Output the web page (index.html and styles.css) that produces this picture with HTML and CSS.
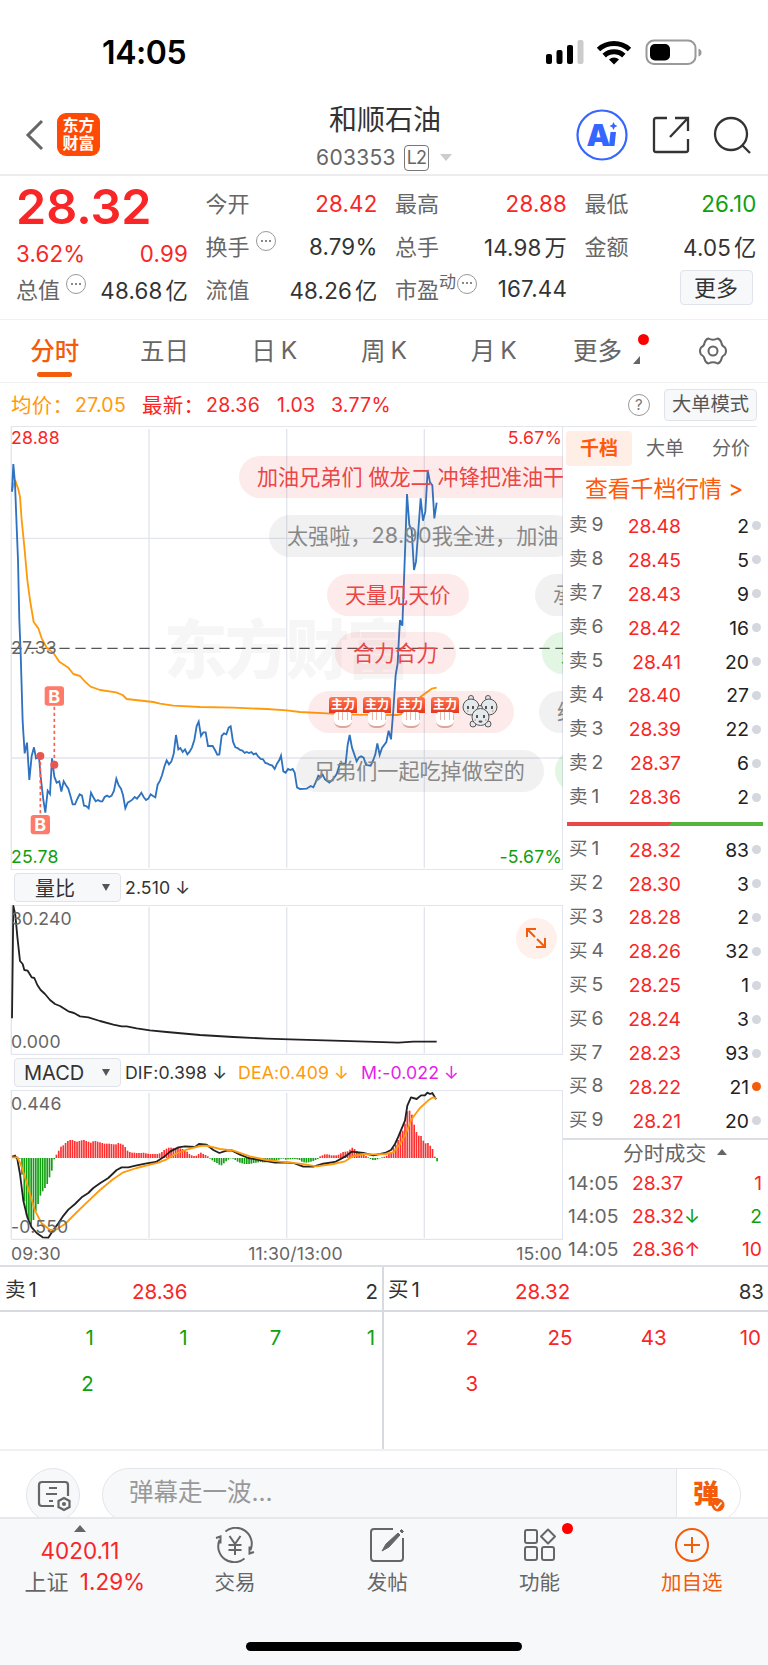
FILE: index.html
```html
<!DOCTYPE html>
<html lang="zh-CN">

<head>
  <meta charset="UTF-8">
  <meta name="viewport" content="width=device-width, initial-scale=1.0">
  <title>和顺石油</title>
  <link rel="stylesheet" href="styles.css">
</head>

<body>
  <div class="status-bar">
    <span class="clock">14:05</span>
    <svg class="status-icons" width="160" height="32" viewBox="0 0 160 32">
      <rect x="2" y="18" width="6" height="10" rx="2" />
      <rect x="12.5" y="14" width="6" height="14" rx="2" />
      <rect x="23" y="9" width="6" height="19" rx="2" />
      <rect x="33.500" y="4" width="6" height="24" rx="2" fill="#ccc" />
      <path d="M54.500 13.500a23 23 0 0 1 31 0M60.200 19.600a14.500 14.500 0 0 1 19.600 0" fill="none" stroke="#000" stroke-width="5" />
      <path d="M70 28.500l-5-5a7.500 7.500 0 0 1 10 0z" />
      <rect x="102.500" y="4.500" width="49" height="23.500" rx="7.500" fill="none" stroke="#999" stroke-width="2" />
      <rect x="106" y="8" width="20" height="16.500" rx="5" />
      <path d="M154.500 12.500q3 1 3 4t-3 4z" fill="#999" />
    </svg>
  </div>

  <header class="navbar">
    <div class="nav-left">
      <svg width="20" height="32" viewBox="0 0 20 32">
        <path d="M17 2L3 16l14 14" fill="none" stroke="#666" stroke-width="3" />
      </svg>
      <div class="brand"><span>东方</span><span>财富</span></div>
    </div>
    <div class="nav-title">
      <h1>和顺石油</h1>
      <p>603353 <span class="level">L2</span> <i class="caret"></i></p>
    </div>
    <div class="nav-right">
      <svg width="52" height="52" viewBox="0 0 52 52">
        <circle cx="26" cy="26" r="24.500" fill="none" stroke="#3566ff" stroke-width="2.200" />
        <text class="ai-text" x="10.500" y="37">A</text>
        <path d="M34.500 23h5.500l-1.500 14h-5.500zM37.500 13l1.300 2.700 2.700 1.300-2.700 1.300-1.300 2.700-1.300-2.700-2.700-1.300 2.700-1.300z" fill="#3566ff" />
      </svg>
      <svg width="38" height="38" viewBox="0 0 38 38" fill="none" stroke="#333" stroke-width="2.300">
        <path d="M15 2H4a2 2 0 0 0-2 2v30a2 2 0 0 0 2 2h30a2 2 0 0 0 2-2V23M23 2h13v13M35.500 2.500L18 21" />
      </svg>
      <svg width="38" height="38" viewBox="0 0 38 38" fill="none" stroke="#333" stroke-width="2.300">
        <circle cx="18" cy="18" r="16" />
        <path d="M29 29l8 8" />
      </svg>
    </div>
  </header>

  <section class="quote">
    <div class="quote-col">
      <strong class="price">28.32</strong>
      <div class="pair change red"><span>3.62%</span><span>0.99</span></div>
      <div class="pair"><label>总值<i class="dots"></i></label><span>48.68<u>亿</u></span></div>
    </div>
    <div class="quote-col">
      <div class="pair"><label>今开</label><span class="red">28.42</span></div>
      <div class="pair"><label>换手<i class="dots"></i></label><span>8.79%</span></div>
      <div class="pair"><label>流值</label><span>48.26<u>亿</u></span></div>
    </div>
    <div class="quote-col">
      <div class="pair"><label>最高</label><span class="red">28.88</span></div>
      <div class="pair"><label>总手</label><span>14.98<u>万</u></span></div>
      <div class="pair"><label>市盈<sup>动</sup><i class="dots"></i></label><span>167.44</span></div>
    </div>
    <div class="quote-col">
      <div class="pair"><label>最低</label><span class="green">26.10</span></div>
      <div class="pair"><label>金额</label><span>4.05<u>亿</u></span></div>
      <div class="pair more"><button>更多</button></div>
    </div>
  </section>

  <nav class="tabs">
    <a class="active">分时</a>
    <a>五日</a>
    <a>日<b>K</b></a>
    <a>周<b>K</b></a>
    <a>月<b>K</b></a>
    <a class="tab-more">更多</a>
    <a class="tab-set">
      <svg width="30" height="30" viewBox="0 0 30 30" fill="none" stroke="#666" stroke-width="2">
        <path d="M10.500 2.500q4.500 2.500 9 0q3 .6 4 4.500q0 2.500 3.500 4.500q2 3.500 0 7q-3.500 2-3.500 4.500q-1 3.900-4 4.500q-4.500-2.500-9 0q-3-.6-4-4.500q0-2.500-3.500-4.500q-2-3.500 0-7q3.500-2 3.500-4.500q1-3.900 4-4.500z" />
        <circle cx="15" cy="15" r="4.500" />
      </svg>
    </a>
  </nav>

  <div class="summary">
    <span class="orange avg">均价：</span><span class="orange avg-val">27.05</span>
    <span class="red last">最新：</span><span class="red last-val">28.36</span>
    <span class="red diff">1.03</span><span class="red">3.77%</span>
    <span class="help">?</span>
    <button class="mode">大单模式</button>
  </div>

  <main class="market">
    <div class="charts">
      <div class="main-chart">
        <svg width="563" height="444" viewBox="0 18 1689 1332">
          <g class="grid">
            <path d="M34 19H1689M34 355H1689M34 1014H1689M34 1349H1689M34 19V1350M1688 19V1350" />
            <path d="M447 27V1343M860 27V1343M1273 27V1343" />
          </g>
          <text class="watermark" x="492" y="758" textLength="738">东方财富</text>
          <path class="mid" d="M34 685H1689" />
          <polyline class="line-avg" points="36,215 40,195 46,182 54,205 60,230 65,300 73,380 82,480 90,540 101,606 115,625 125,655 140,683 160,698 178,725 205,743 220,762 240,768 255,785 272,800 300,810 348,817 368,825 380,837 460,846 480,851 520,857 600,861 700,863 800,867 860,871 900,876 980,880 1060,884 1195,885 1210,880 1240,850 1265,828 1295,806 1310,803" />
          <polyline class="line-price" points="36,215 40,132 45,190 50,320 54,420 58,600 62,700 68,905 74,1000 81,968 88,1080 95,1008 102,982 108,1015 117,1010 122,1070 130,1140 136,1178 143,1112 150,1122 156,1015 163,1070 170,1088 178,1084 184,1115 191,1084 198,1096 205,1106 212,1130 218,1153 225,1153 232,1137 239,1123 246,1127 252,1157 259,1158 266,1165 273,1118 280,1132 287,1144 294,1140 301,1144 307,1144 314,1131 321,1127 328,1131 335,1127 342,1112 349,1076 356,1096 363,1106 369,1125 376,1165 383,1148 390,1144 397,1139 404,1131 411,1136 418,1127 424,1118 431,1131 438,1140 445,1136 452,1123 459,1128 466,1132 473,1094 480,1082 486,1066 493,1040 500,1021 507,1033 514,1025 521,1002 528,945 535,988 541,984 548,996 555,988 562,1003 569,995 576,982 583,960 590,918 596,905 603,948 610,937 617,937 624,978 638,978 645,990 652,1004 658,1003 665,948 672,940 679,943 686,923 692,919 699,965 706,982 713,984 720,990 727,992 734,999 740,996 747,999 754,996 761,1003 768,1000 775,1010 782,1017 789,1018 796,1029 803,1031 810,1035 817,1037 824,1047 831,1031 838,1020 843,1007 850,1054 857,1058 864,1047 871,1050 878,1047 884,1058 891,1102 900,1107 920,1106 932,1098 940,1102 948,1085 955,1067 962,1072 968,1064 975,1078 988,1088 1000,1077 1010,1062 1020,1031 1037,1030 1043,975 1049,945 1056,983 1063,1003 1070,1024 1077,1012 1083,1009 1091,1013 1098,1035 1112,1037 1120,1020 1126,1003 1132,970 1139,1005 1146,984 1159,966 1166,932 1173,958 1180,870 1187,765 1193,730 1197,650 1200,600 1207,617 1212,480 1216,370 1221,222 1228,315 1235,330 1242,450 1248,425 1255,330 1262,235 1269,302 1276,275 1283,150 1290,187 1297,196 1303,295 1310,248" />
          <g class="buy-marks">
            <path d="M163 860V1034M121 1008V1184" />
            <circle cx="163" cy="1034" r="12" />
            <circle cx="121" cy="1008" r="12" />
            <rect x="134" y="799" width="58" height="58" rx="9" />
            <rect x="92" y="1185" width="58" height="58" rx="9" />
            <text x="163" y="848">B</text>
            <text x="121" y="1234">B</text>
          </g>
          <text class="axis up" x="33" y="73">28.88</text>
          <text class="axis" x="33" y="702">27.33</text>
          <text class="axis down" x="33" y="1330">25.78</text>
          <text class="axis up end" x="1686" y="73">5.67%</text>
          <text class="axis down end" x="1686" y="1330">-5.67%</text>
        </svg>

        <div class="danmaku">
          <div class="track">
            <span class="pill pink d1">加油兄弟们 做龙二 冲锋把准油干</span>
          </div>
          <div class="track">
            <span class="pill grey d2">太强啦，<b>28.90</b>我全进，加油</span>
          </div>
          <div class="track">
            <span class="pill pink d3">天量见天价</span><span class="pill grey d3b">承</span>
          </div>
          <div class="track">
            <span class="pill pink d4">合力合力</span><span class="pill mint d4b">多</span>
          </div>
          <div class="track">
            <span class="pill pink d5">
              <i class="fist">主力</i><i class="fist">主力</i><i class="fist">主力</i><i class="fist">主力</i>
              <svg width="36" height="34" viewBox="0 0 36 34" fill="#e4e9ec" stroke="#555" stroke-width="1">
                <circle cx="9" cy="4" r="2.500" /><circle cx="26" cy="4" r="2.500" />
                <circle cx="9" cy="13" r="8" /><circle cx="27" cy="13" r="8" />
                <circle cx="11" cy="30" r="3" /><circle cx="26" cy="30" r="3" />
                <circle cx="18" cy="14" r="2.500" /><circle cx="18.500" cy="23" r="8.500" />
                <path d="M6 12v3M11 12v3M24 12v3M30 12v3M15 21v3M22 21v3M17 27q1.500 1.500 3 0" stroke-width="2" />
                <path d="M5 17h1.500M30 17h1.500M12.500 26h1.500M23 26h1.500" stroke="#f5a9a0" stroke-width="2" />
              </svg>
            </span><span class="pill grey d5b">给</span>
          </div>
          <div class="track">
            <span class="pill grey d6">兄弟们一起吃掉做空的</span><span class="pill mint d6b"></span>
          </div>
        </div>
      </div>

      <div class="indicator">
        <button class="picker">量比<i></i></button>
        <span>2.510 ↓</span>
      </div>
      <div class="sub-chart">
        <svg width="563" height="150" viewBox="0 135 1689 450">
          <g class="grid">
            <path d="M34 136H1689M34 583H1689M34 136V583M1688 136V583" />
            <path d="M447 142V580M860 142V580M1273 142V580" />
          </g>
          <polyline class="line-dark" points="36,475 40,138 46,165 52,230 60,303 68,312 73,330 83,332 95,352 103,354 112,375 122,390 135,402 150,420 165,432 180,438 205,454 222,459 240,469 265,472 300,483 340,494 365,499 380,499 410,505 450,511 500,516 600,525 700,531 800,536 870,538 1000,542 1100,545 1195,548 1240,545 1310,545" />
          <text class="axis" x="33" y="194">30.240</text>
          <text class="axis" x="33" y="564">0.000</text>
        </svg>
        <div class="expand">
          <svg width="22" height="22" viewBox="0 0 22 22" fill="none" stroke="#f25c0a" stroke-width="2">
            <path d="M2 10V2h9M2 2l8 8M12 12l8 8M20 11v9h-9" />
          </svg>
        </div>
      </div>

      <div class="indicator macd-head">
        <button class="picker">MACD<i></i></button>
        <span>DIF:0.398 ↓</span>
        <span class="orange">DEA:0.409 ↓</span>
        <span class="magenta">M:-0.022 ↓</span>
      </div>
      <div class="sub-chart">
        <svg width="563" height="150" viewBox="0 688 1689 450">
          <g class="grid">
            <path d="M34 689H1689M34 1136H1689M34 689V1136M1688 689V1136" />
            <path d="M447 696V1132M860 696V1132M1273 696V1132" />
          </g>
          <g id="macd_bars"></g>
          <polyline class="line-dark" points="36,888 45,886 52,895 60,940 70,1020 82,1070 95,1100 110,1117 128,1130 145,1131 160,1108 175,1088 188,1068 205,1047 225,1030 245,1010 265,997 280,982 300,968 325,952 350,928 365,920 385,920 410,914 440,908 468,904 490,890 510,873 535,860 555,857 585,859 597,850 620,852 640,868 658,877 680,870 695,869 720,882 745,892 790,900 825,906 850,905 880,907 910,918 940,918 965,910 1005,904 1035,888 1055,873 1090,877 1120,884 1155,877 1173,868 1185,850 1195,828 1215,780 1222,735 1233,710 1250,715 1263,704 1275,704 1282,696 1290,700 1297,697 1308,716" />
          <polyline class="line-avg" points="36,890 52,890 62,910 75,950 90,1000 105,1050 125,1088 150,1108 170,1106 195,1090 225,1060 260,1026 300,988 340,955 370,935 410,922 450,912 475,906 500,896 530,878 560,867 600,856 620,855 660,865 700,870 750,887 800,898 840,903 900,909 950,917 1000,910 1035,902 1060,886 1090,880 1120,881 1155,880 1180,875 1200,850 1215,825 1235,775 1260,742 1285,719 1300,710 1308,714" />
          <text class="axis" x="33" y="748">0.446</text>
          <text class="axis" x="33" y="1118">-0.550</text>
        </svg>
      </div>
      <div class="times"><span>09:30</span><span>11:30/13:00</span><span>15:00</span></div>
    </div>

    <aside class="book">
      <div class="book-tabs"><span class="on">千档</span><span>大单</span><span>分价</span></div>
      <a class="book-link">查看千档行情 &gt;</a>
      <div id="asks"></div>
      <div class="ratio"></div>
      <div id="bids"></div>
      <div class="trades">
        <h2>分时成交 <i></i></h2>
        <p><span>14:05</span><b>28.37</b><em>1</em></p>
        <p><span>14:05</span><b>28.32<s class="green">↓</s></b><em class="green">2</em></p>
        <p><span>14:05</span><b>28.36<s>↑</s></b><em>10</em></p>
      </div>
    </aside>
  </main>

  <section class="queue">
    <div class="side">
      <div class="side-head"><span>卖<u>1</u></span><b>28.36</b><em>2</em></div>
      <div class="side-grid green"><span>1</span><span>1</span><span>7</span><span>1</span><span>2</span></div>
    </div>
    <div class="side">
      <div class="side-head"><span>买<u>1</u></span><b>28.32</b><em>83</em></div>
      <div class="side-grid red"><span>2</span><span>25</span><span>43</span><span>10</span><span>3</span></div>
    </div>
  </section>

  <section class="comment">
    <div class="round">
      <svg width="34" height="32" viewBox="0 0 34 32" fill="none" stroke="#666" stroke-width="2.200">
        <path d="M17 26H5a3 3 0 0 1-3-3V5a3 3 0 0 1 3-3h23a3 3 0 0 1 3 3v11M12 8h8M9 14h11M12 21h4M27 18l5.500 3v6L27 30l-5.500-3v-6z" />
        <circle cx="27" cy="24" r="1" />
      </svg>
    </div>
    <div class="input">
      <span>弹幕走一波...</span>
      <div class="bullet">弹
        <svg width="14" height="14" viewBox="0 0 14 14">
          <circle cx="7" cy="7" r="6.500" fill="#f25c0a" />
          <path d="M3.500 7l2.500 3 4.500-5.500" fill="none" stroke="#fff" stroke-width="1.600" />
        </svg>
      </div>
    </div>
  </section>

  <footer class="tabbar">
    <div class="index">
      <i></i>
      <b>4020.11</b>
      <p>上证 <b>1.29%</b></p>
    </div>
    <div class="item">
      <svg width="40" height="36" viewBox="0 0 40 36" fill="none" stroke="#666" stroke-width="2">
        <path d="M10.500 4.500A16 16 0 0 1 35.500 23M29.500 31.500A16 16 0 0 1 4.500 13M1 11l4.500-1.500v7M39 25l-4.500 1.500v-7" />
        <path d="M14.500 9l5.500 8 5.500-8M20 17v11M13.500 18h13M13.500 23h13" />
      </svg>
      <span>交易</span>
    </div>
    <div class="item">
      <svg width="36" height="36" viewBox="0 0 36 36" fill="none" stroke="#666" stroke-width="2">
        <path d="M24 2H5a3 3 0 0 0-3 3v26a3 3 0 0 0 3 3h26a3 3 0 0 0 3-3V11" />
        <path d="M13 24l4-7L29 6l2 2-11 12zM31 4l1.500-1.500 2 2L33 6z" fill="#666" stroke-width="1" />
      </svg>
      <span>发帖</span>
    </div>
    <div class="item badge">
      <svg width="36" height="36" viewBox="0 0 36 36" fill="none" stroke="#666" stroke-width="2">
        <rect x="3" y="3" width="12" height="13" rx="2" />
        <rect x="3" y="20" width="12" height="13" rx="2" />
        <rect x="20" y="20" width="12" height="13" rx="2" />
        <path d="M26 2.500l7 7-7 7-7-7z" stroke-linejoin="round" />
      </svg>
      <span>功能</span>
    </div>
    <div class="item add">
      <svg width="36" height="36" viewBox="0 0 36 36" fill="none" stroke="#f25c0a" stroke-width="2">
        <circle cx="18" cy="18" r="16" />
        <path d="M18 10v16M10 18h16" />
      </svg>
      <span>加自选</span>
    </div>
    <div class="home"></div>
  </footer>

  <script src="script.js"></script>
</body>

</html>
```
FILE: styles.css
```css
* {
  box-sizing: border-box;
  margin: 0;
  padding: 0;
}

body {
  width: 768px;
  height: 1665px;
  overflow: hidden;
  background: #fff;
  color: #333;
  font-family: Inter, "Noto Sans CJK SC", sans-serif;
  font-size: 22px;
  text-autospace: no-autospace;
  white-space: nowrap;
}

i,
em,
u,
s {
  font-style: normal;
  text-decoration: none;
}

b {
  font-weight: 400;
}

button {
  font: inherit;
  color: inherit;
  background: #f7f8fa;
  border: 1.5px solid #e0e3e9;
  border-radius: 4px;
}

svg {
  display: block;
  flex: none;
}

.red {
  color: #f82626;
}

.green {
  color: #0fa00f;
}

.orange {
  color: #ff9a0a;
}

.magenta {
  color: #e61ee6;
}

/* Status bar */
.status-bar {
  height: 95px;
  padding: 36px 64px 0 102px;
  display: flex;
  justify-content: space-between;
}

.clock {
  font-size: 32px;
  line-height: 34px;
  font-weight: 600;
  letter-spacing: -.4px;
  color: #000;
}

/* Navigation */
.navbar {
  height: 81px;
  padding: 0 17px 0 25px;
  display: flex;
  justify-content: space-between;
  border-bottom: 2px solid #ececee;
}

.nav-left,
.nav-right {
  width: 176px;
  display: flex;
  align-items: center;
}

.nav-left {
  gap: 12px;
}

.nav-right {
  width: 175px;
  justify-content: space-between;
}

.brand {
  width: 43px;
  height: 43px;
  border-radius: 9px;
  background: #ff4a05;
  color: #fff;
  display: flex;
  flex-direction: column;
  align-items: center;
  justify-content: center;
  font-size: 16px;
  line-height: 17.5px;
  font-weight: 700;
}

.nav-title {
  width: 140px;
  margin-right: 7px;
  display: flex;
  flex-direction: column;
  align-items: center;
}

.nav-title h1 {
  margin-top: 8px;
  font-size: 28px;
  line-height: 34px;
  font-weight: 400;
}

.nav-title p {
  display: flex;
  align-items: center;
  gap: 8px;
  margin-top: 7px;
  padding-right: 2px;
  font-size: 21px;
  line-height: 27px;
  letter-spacing: .3px;
  color: #666;
}

.level {
  width: 25px;
  height: 26px;
  border: 1.5px solid #777;
  border-radius: 4px;
  font-size: 18px;
  line-height: 24px;
  letter-spacing: -1px;
  text-align: center;
}

.caret {
  border: 6px solid transparent;
  border-top: 7px solid #ccc;
  border-bottom: 0;
  margin-left: 3px;
}

.ai-text {
  font-size: 30px;
  font-weight: 900;
  fill: #3566ff;
}

/* Quote */
.quote {
  height: 144px;
  padding: 6px 12px 0 16px;
  display: grid;
  grid-template-columns: 172px 172px 172px 172px;
  column-gap: 17.5px;
  border-bottom: 1.5px solid #f0f0f2;
}

.quote-col {
  display: flex;
  flex-direction: column;
}

.price {
  height: 52px;
  font-size: 48.5px;
  line-height: 50px;
  font-weight: 600;
  color: #f82626;
}

.pair {
  height: 42.700px;
  display: flex;
  justify-content: space-between;
  align-items: center;
}

.pair > label,
.pair > span {
  position: relative;
  top: -1px;
}

.pair > span {
  top: 0;
  font-size: 22.3px;
  letter-spacing: .2px;
}

.pair label {
  display: flex;
  align-items: center;
  color: #666;
}

.change {
  height: 34px;
  padding-top: 5px;
}

.quote-col u {
  padding-left: 3px;
}

.pair sup {
  align-self: flex-start;
  font-size: 17px;
  line-height: 20px;
}

.dots {
  position: relative;
  top: -4px;
  width: 20px;
  height: 20px;
  margin-left: 6px;
  border: 1.5px solid #999;
  border-radius: 50%;
}

sup + .dots {
  margin-left: 1px;
}

.dots::before {
  content: "";
  display: block;
  width: 2px;
  height: 2px;
  margin: 7.5px auto;
  background: #888;
  box-shadow: -4px 0 #888, 4px 0 #888;
}

.more button {
  width: 73px;
  height: 35px;
  margin: -2px 4px 0 auto;
  line-height: 30px;
}

/* Period tabs */
.tabs {
  height: 63px;
  display: flex;
  font-size: 24.5px;
  color: #666;
  border-bottom: 1.5px solid #f0f0f2;
}

.tabs a {
  position: relative;
  width: 109.800px;
  padding-bottom: 3px;
  display: flex;
  justify-content: center;
  align-items: center;
}

.tabs b {
  padding-left: 5px;
}

.tabs .active {
  color: #f25c0a;
  font-weight: 500;
}

.tabs .active::after {
  content: "";
  position: absolute;
  bottom: 5px;
  width: 35px;
  height: 5.500px;
  border-radius: 3px;
  background: #f25c0a;
}

.tabs .tab-more {
  padding-right: 12px;
}

.tabs .tab-set {
  padding-bottom: 0;
}

.tab-more::before {
  content: "";
  position: absolute;
  right: 9px;
  top: 14px;
  width: 11px;
  height: 11px;
  border-radius: 50%;
  background: #f00;
}

.tab-more::after {
  content: "";
  position: absolute;
  right: 18px;
  bottom: 18px;
  border-left: 7px solid transparent;
  border-bottom: 8px solid #666;
}

/* Summary line */
.summary {
  height: 43px;
  padding: 0 11px;
  display: flex;
  align-items: center;
  font-size: 19.5px;
  letter-spacing: .25px;
}

.summary .avg,
.summary .last {
  width: 64px;
  margin-top: -2px;
  font-size: 20.5px;
}

.summary .avg-val {
  width: 67px;
}

.summary .last-val {
  width: 71px;
}

.summary .diff {
  width: 54px;
}

.help {
  width: 22px;
  height: 22px;
  margin-left: auto;
  margin-right: 14px;
  border: 1.5px solid #999;
  border-radius: 50%;
  font-size: 15px;
  line-height: 19px;
  text-align: center;
  color: #777;
}

.mode {
  width: 93px;
  height: 32px;
  color: #555;
  font-size: 19.3px;
  line-height: 27px;
  letter-spacing: 0;
}

/* Charts */
.market {
  height: 841px;
  display: flex;
  border-bottom: 2px solid #dcdee4;
}

.charts {
  width: 563px;
}

.main-chart {
  position: relative;
  height: 444px;
  overflow: hidden;
}

.grid path {
  fill: none;
  stroke: #e2e5ed;
  stroke-width: 4;
}

.watermark {
  font-size: 190px;
  font-weight: 900;
  fill: #f6f6f7;
}

.mid {
  stroke: #555;
  stroke-width: 4;
  stroke-dasharray: 31 17;
}

.line-avg,
.line-price,
.line-dark {
  fill: none;
  stroke: #ff9a0a;
  stroke-width: 5.5;
  stroke-linejoin: round;
}

.line-price {
  stroke: #2e72c0;
  stroke-linejoin: miter;
}

.line-dark {
  stroke: #222;
}

.buy-marks path {
  stroke: #fa5f50;
  stroke-width: 5;
  stroke-dasharray: 10 8;
}

.buy-marks circle {
  fill: #e9564f;
}

.buy-marks rect {
  fill: #ff7a68;
}

.buy-marks text {
  font-size: 54px;
  font-weight: 700;
  text-anchor: middle;
  fill: #fff;
}

.axis {
  font-size: 53px;
  letter-spacing: .6px;
  fill: #666;
}

.up {
  fill: #f82626;
}

.down {
  fill: #0fa00f;
}

.end {
  text-anchor: end;
}

/* Danmaku floats over the price lines */
.danmaku {
  position: absolute;
  inset: 30px 0 0 0;
  display: flex;
  flex-direction: column;
  gap: 16.8px;
}

.track {
  height: 42px;
  display: flex;
}

.pill {
  flex: none;
  display: flex;
  align-items: center;
  height: 42px;
  padding: 0 18px 2px;
  border-radius: 21px;
  font-size: 21.1px;
}

.pill b {
  font-size: 21.5px;
  letter-spacing: .3px;
}

.pink {
  background: rgba(236, 62, 62, .1);
  color: #ec4545;
}

.grey {
  background: rgba(120, 120, 120, .1);
  color: #888;
}

.mint {
  background: rgba(60, 185, 60, .14);
  color: #3cb43c;
}

.d1 {
  margin-left: 239px;
}

.d2 {
  margin-left: 269px;
}

.d3 {
  margin-left: 327px;
  width: 142px;
}

.d3b {
  margin-left: 66px;
}

.d4 {
  margin-left: 335px;
  width: 121px;
}

.d4b {
  margin-left: 86px;
}

.d5 {
  margin-left: 308px;
  width: 206px;
  padding-left: 21px;
  gap: 6px;
}

.d5 svg {
  margin-left: -3px;
}

.d5b {
  margin-left: 25px;
}

.d6 {
  margin-left: 296px;
  width: 248px;
}

.d6b {
  margin-left: 11px;
  width: 60px;
}

.fist {
  position: relative;
  flex: none;
  width: 28px;
  height: 29px;
  font-size: 12px;
  line-height: 15px;
  font-weight: 700;
  text-align: center;
  color: #fff;
  background: linear-gradient(#ff7a50, #e9361f) 0 0 / 28px 16px no-repeat;
  border-radius: 3px;
}

.fist::after {
  content: "";
  position: absolute;
  left: 5px;
  top: 15px;
  width: 18px;
  height: 14px;
  border-radius: 4px 4px 7px 7px;
  border-bottom: 2px solid #dda698;
  background: repeating-linear-gradient(90deg, #fff 0 3.500px, #e8b8ac 3.500px 4.500px) 0 0 / 18px 8px no-repeat, #fff;
}

.indicator {
  height: 35px;
  padding-left: 14px;
  display: flex;
  align-items: center;
  gap: 4px;
  font-size: 17.7px;
  letter-spacing: .1px;
}

.indicator .orange {
  margin-left: 7px;
}

.indicator .magenta {
  margin-left: 8px;
}

.picker {
  width: 107px;
  height: 29px;
  padding: 0 10px 0 9px;
  display: flex;
  align-items: center;
  justify-content: space-between;
  font-size: 20px;
}

.indicator:not(.macd-head) .picker {
  padding-left: 20px;
}

.picker i {
  border: 4.500px solid transparent;
  border-top: 7px solid #555;
  border-bottom: 0;
}

.sub-chart {
  position: relative;
  height: 150px;
}

.expand {
  position: absolute;
  right: 6px;
  top: 13px;
  width: 41px;
  height: 41px;
  padding: 9px;
  border-radius: 50%;
  background: #fef0ea;
}

.times {
  height: 25px;
  padding: 0 1px 0 11px;
  display: grid;
  grid-template-columns: 1fr 2fr 1fr;
  font-size: 17.7px;
  line-height: 28px;
  letter-spacing: .1px;
  color: #666;
}

.times span:nth-child(2) {
  padding-left: 18px;
  text-align: center;
}

.times span:last-child {
  text-align: right;
}

/* Order book */
.book {
  width: 205px;
  font-size: 19.3px;
}

.book-tabs {
  height: 40px;
  margin-right: 11px;
  padding: 4px 0 0 3px;
  display: flex;
  border-top: 1px solid #e2e5ed;
  color: #666;
}

.book-tabs span {
  flex: none;
  width: 66px;
  font-size: 19px;
  line-height: 35px;
  text-align: center;
}

.book-tabs .on {
  border-radius: 4px;
  background: #ffeee6;
  color: #ff5a0a;
  font-weight: 700;
}

.book-link {
  display: block;
  height: 43px;
  padding-left: 22px;
  font-size: 22.800px;
  line-height: 46px;
  color: #ff5a0a;
}

.level-row {
  height: 33.920px;
  padding: 0 7px 0 6px;
  display: flex;
  align-items: center;
  color: #666;
}

.level-row span {
  width: 52px;
  display: flex;
  align-items: baseline;
  gap: 4px;
  font-size: 18.500px;
  line-height: 26px;
  margin-top: -3px;
}

.level-row u {
  font-size: 19.3px;
}

.level-row b {
  width: 60px;
  text-align: right;
  color: #f82626;
}

.level-row em {
  flex: 1;
  text-align: right;
  color: #222;
}

.level-row i {
  width: 9px;
  height: 9px;
  margin-left: 3px;
  border-radius: 50%;
  background: #d4d7de;
}

.level-row .hot {
  background: #f25c0a;
}

.ratio {
  height: 4px;
  margin: 8px 5px 6.500px 4px;
  background: linear-gradient(135deg, #e84848 0 53%, #55b53c 53%);
}

.trades {
  border-top: 2px solid #dcdee4;
}

.trades h2 {
  height: 27px;
  padding: 0 0 2px 60px;
  display: flex;
  align-items: center;
  gap: 11px;
  font-size: 20.800px;
  font-weight: 400;
  color: #666;
}

.trades i {
  border: 5px solid transparent;
  border-bottom: 6px solid #666;
  border-top: 0;
}

.trades p {
  height: 33px;
  padding: 0 6px 0 5px;
  display: flex;
  align-items: center;
  color: #666;
}

.trades span {
  width: 64px;
  letter-spacing: .2px;
}

.trades b {
  color: #f82626;
}

.trades s {
  display: inline-block;
  width: 13px;
}

.trades em {
  margin-left: auto;
}

.trades em:not(.green) {
  color: #f82626;
}

/* Order queue */
.queue {
  height: 184px;
  display: flex;
  font-size: 20.500px;
  border-bottom: 2px solid #eff0f3;
}

.side {
  width: 384px;
}

.side:first-child {
  border-right: 2px solid #d8dae1;
}

.side-head {
  height: 45px;
  padding: 5px 4px 0 5px;
  display: flex;
  align-items: center;
  border-bottom: 2px solid #d8dae1;
}

.side:last-child .side-head {
  padding-left: 4px;
}

.side-head span {
  width: 127px;
  line-height: 26px;
  margin-top: -3px;
}

.side-head u {
  padding-left: 3px;
}

.side-head b {
  color: #f82626;
}

.side-head em {
  margin-left: auto;
}

.side-grid {
  padding: 2px 7px 0 0;
  display: grid;
  grid-template-columns: repeat(4, 1fr);
  grid-auto-rows: 46.500px;
  align-items: center;
  text-align: right;
}

/* Comment input */
.comment {
  height: 66px;
  padding: 17px 27px 0 26px;
  display: flex;
  gap: 22px;
  overflow: hidden;
}

.round {
  flex: none;
  width: 54px;
  height: 54px;
  display: flex;
  align-items: center;
  justify-content: center;
  padding: 1px 0 0 2px;
  border: 1.5px solid #e3e5ea;
  border-radius: 50%;
  background: #f7f8fa;
}

.input {
  flex: 1;
  height: 54px;
  padding-left: 26px;
  display: flex;
  justify-content: space-between;
  border: 1.5px solid #e3e5ea;
  border-radius: 27px;
  background: #f7f8fa;
  overflow: hidden;
  font-size: 24.500px;
  line-height: 47px;
  color: #999;
}

.bullet {
  position: relative;
  width: 64px;
  padding-left: 16px;
  border-left: 1.5px solid #e3e5ea;
  background: #fff;
  color: #f25c0a;
  font-size: 26px;
  line-height: 49px;
  font-weight: 900;
}

.bullet svg {
  position: absolute;
  left: 34px;
  top: 29px;
}

/* Bottom tab bar */
.tabbar {
  position: relative;
  height: 149px;
  padding-left: 4px;
  display: flex;
  border-top: 2px solid #e6e8ec;
  background: #f7f8fa;
  color: #666;
}

.index {
  width: 155px;
  padding-right: 3px;
  display: flex;
  flex-direction: column;
  align-items: center;
  line-height: 32px;
}

.index i {
  margin: 6px 0 3px;
  border: 6px solid transparent;
  border-bottom: 7px solid #666;
  border-top: 0;
}

.index b {
  font-size: 22.500px;
  color: #f82626;
}

.index p {
  margin-left: 10px;
  line-height: 30px;
}

.index p b {
  margin-left: 5px;
}

.item {
  position: relative;
  width: 152.500px;
  padding-top: 8px;
  display: flex;
  flex-direction: column;
  align-items: center;
  font-size: 20.500px;
  line-height: 40px;
}

.badge::after {
  content: "";
  position: absolute;
  left: 99px;
  top: 4px;
  width: 11px;
  height: 11px;
  border-radius: 50%;
  background: #f00;
}

.add {
  color: #f25c0a;
}

.home {
  position: absolute;
  left: 246px;
  bottom: 15px;
  width: 276px;
  height: 9px;
  border-radius: 5px;
  background: #000;
}
```
FILE: script.js
```js
const ASKS = [[9, "28.48", 2], [8, "28.45", 5], [7, "28.43", 9], [6, "28.42", 16], [5, "28.41", 20], [4, "28.40", 27], [3, "28.39", 22], [2, "28.37", 6], [1, "28.36", 2]]
const BIDS = [[1, "28.32", 83], [2, "28.30", 3], [3, "28.28", 2], [4, "28.26", 32], [5, "28.25", 1], [6, "28.24", 3], [7, "28.23", 93], [8, "28.22", 21, true], [9, "28.21", 20]]

function renderLevels(id, label, rows) {
  document.getElementById(id).innerHTML = rows.map(([n, price, qty, hot]) =>
    `<div class="level-row"><span>${label}<u>${n}</u></span><b>${price}</b><em>${qty}</em><i class="${hot ? "hot" : ""}"></i></div>`
  ).join("")
}

renderLevels("asks", "卖", ASKS)
renderLevels("bids", "买", BIDS)

// One bar per minute, positive is above the zero line
const MACD = [4, 10, 4, -2, -50, -130, -172, -185, -200, -186, -160, -138, -113, -100, -90, -78, -58, -38, -4,
  10, 22, 34, 38, 45, 51, 54, 54, 51, 49, 51, 53, 54, 51, 49, 46, 50, 51, 49, 47, 45, 43, 43, 43, 42, 41, 41, 45, 43, 40,
  33, 22, 18, 16, 16, 15, 15, 15, 16, 14, 13, 12, 12, 12, 12, 14, 18, 24, 28, 31, 31, 30, 30, 30, 29, 27, 24, 19, 12, 8,
  6, 7, 12, 16, 12, 9, 5, -2, -7, -12, -15, -20, -22, -16, -10, -5, -1, -2, -6, -11, -14, -16, -18, -18, -18, -17, -15,
  -14, -13, -12, -13, -13, -12, -11, -10, -9, -7, -5, -2, -2, -5, -4, -4, -3, -3, -4, -6, -11, -13, -14, -13, -11, -9,
  -6, -3, 5, 8, 11, 11, 10, 8, 8, 8, 10, 14, 18, 19, 20, 25, 31, 27, 21, 15, 11, 10, 6, 2, -3, -6, -6, -4, -1, 2, 4,
  7, 14, 18, 30, 40, 54, 78, 82, 103, 140, 142, 130, 100, 78, 67, 66, 52, 44, 45, 37, 27, 4, -10]

document.getElementById("macd_bars").innerHTML = MACD.map((v, i) => {
  const x = 36 + i * 6.88
  return `<rect x="${x}" y="${v > 0 ? 892 - v : 892}" width="5" height="${Math.abs(v)}" fill="${v > 0 ? "#ff3030" : "#12a012"}" />`
}).join("")
```
